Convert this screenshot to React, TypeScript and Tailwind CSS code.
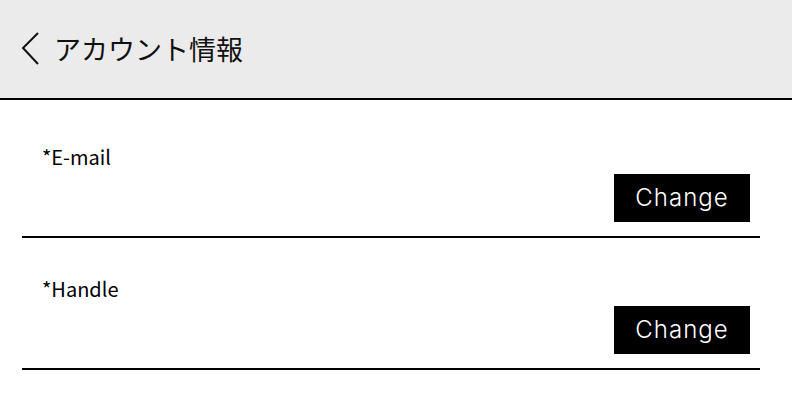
export default function App() {
  const Row = ({ label, first }: { label: string; first?: boolean }) => (
    <div className={`ml-[22px] mr-[32px] border-b-2 border-black ${first ? "pt-[44px]" : "pt-[38px]"} pb-[14px]`}>
      <div className="pl-5 text-[20px] leading-[26px] font-normal text-black" style={{ fontFamily: '"Noto Sans CJK JP", sans-serif' }}>
        {label}
      </div>
      <div className="mt-[4px] flex justify-end pr-[10px]">
        <button
          className="flex h-[48px] w-[136px] items-center justify-center bg-black text-[24px] font-light tracking-[1px] text-white"
          style={{ fontFamily: '"Inter", sans-serif' }}
        >
          Change
        </button>
      </div>
    </div>
  );
  return (
    <div className="min-h-[410px] w-full bg-white">
      <div className="flex h-[100px] items-center border-b-2 border-black bg-[#ebebeb] pl-[20px]">
        <svg width="22" height="34" viewBox="0 0 22 34" className="mr-[12px] shrink-0">
          <path d="M18 1 L3 16 L18 32" fill="none" stroke="#111" strokeWidth="2" />
        </svg>
        <span className="text-[27px] text-[#111]" style={{ fontFamily: '"Noto Sans CJK JP", sans-serif' }}>
          アカウント情報
        </span>
      </div>
      <Row label="*E-mail" first />
      <Row label="*Handle" />
    </div>
  );
}
